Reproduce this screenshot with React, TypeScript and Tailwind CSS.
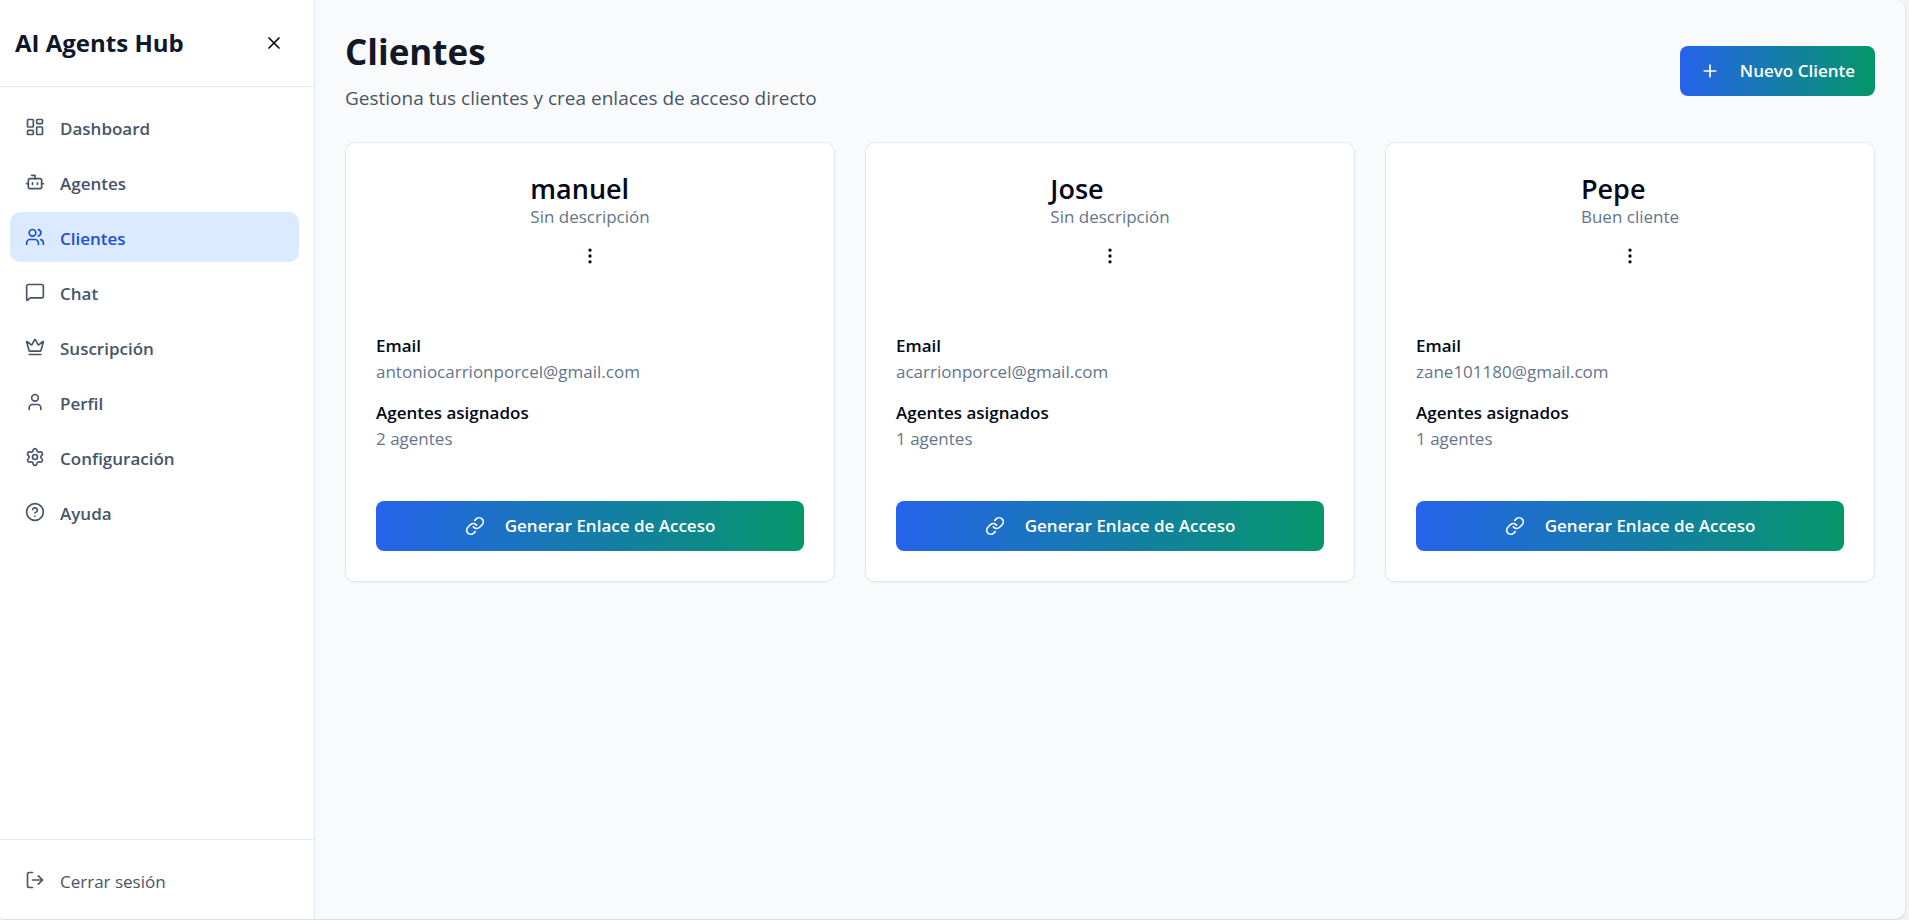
import { useState } from 'react';
import {
  Bot,
  CircleHelp,
  Crown,
  EllipsisVertical,
  LayoutDashboard,
  Link,
  LogOut,
  MessageSquare,
  Plus,
  Settings,
  User,
  Users,
  X,
} from 'lucide-react';

type Client = {
  id: number;
  name: string;
  description: string;
  email: string;
  agents: number;
};

const navItems = [
  { label: 'Dashboard', icon: LayoutDashboard },
  { label: 'Agentes', icon: Bot },
  { label: 'Clientes', icon: Users },
  { label: 'Chat', icon: MessageSquare },
  { label: 'Suscripción', icon: Crown },
  { label: 'Perfil', icon: User },
  { label: 'Configuración', icon: Settings },
  { label: 'Ayuda', icon: CircleHelp },
];

const clients: Client[] = [
  { id: 1, name: 'manuel', description: '', email: 'antoniocarrionporcel@gmail.com', agents: 2 },
  { id: 2, name: 'Jose', description: '', email: 'acarrionporcel@gmail.com', agents: 1 },
  { id: 3, name: 'Pepe', description: 'Buen cliente', email: 'zane101180@gmail.com', agents: 1 },
];

function Sidebar() {
  const [active, setActive] = useState('Clientes');

  return (
    <aside className="flex w-[315px] shrink-0 flex-col border-r border-[#e2e8f0] bg-white">
      <div className="flex h-[87px] items-center justify-between border-b border-[#e2e8f0] pr-5 pb-px pl-[15px]">
        <h2 className="text-2xl font-bold text-[#0f172a]">AI Agents Hub</h2>
        <button type="button" aria-label="Cerrar menú" className="flex h-10 w-10 items-center justify-center text-[#020817]">
          <X className="h-5 w-5" />
        </button>
      </div>

      <nav className="flex flex-1 flex-col gap-[5px] pt-[15px] pr-[15px] pl-[10px]">
        {navItems.map(({ label, icon: Icon }) => {
          const color = label === active ? 'bg-[#dbeafe] text-[#1d4ed8]' : 'text-[#475569] hover:bg-[#f1f5f9]';

          return (
            <a
              key={label}
              href="#"
              onClick={() => setActive(label)}
              className={`flex h-[50px] items-center gap-[15px] rounded-[10px] px-[15px] text-[17px] font-semibold ${color}`}
            >
              <Icon className="h-5 w-5" />
              <span className="pt-[3px]">{label}</span>
            </a>
          );
        })}
      </nav>

      <div className="border-t border-[#e2e8f0] pt-[15px] pr-[15px] pb-[14px] pl-[10px]">
        <button type="button" className="flex h-[50px] w-full items-center gap-[15px] px-[15px] text-[17px] text-[#475569]">
          <LogOut className="h-5 w-5" />
          <span className="pt-[3px]">Cerrar sesión</span>
        </button>
      </div>
    </aside>
  );
}

function ClientCard({ client }: { client: Client }) {
  return (
    <article className="rounded-[10px] border border-[#e2e8f0] bg-white p-[30px] text-[17px] leading-[26px] shadow-xs">
      <div className="flex h-[160px] flex-col items-center gap-0.5">
        <div>
          <h3 className="text-[27px] leading-8 font-semibold text-[#020817]">{client.name}</h3>
          <p className="leading-6 text-[#64748b]">{client.description || 'Sin descripción'}</p>
        </div>
        <button type="button" aria-label="Opciones" className="flex h-[50px] w-[50px] items-center justify-center text-[#020817]">
          <EllipsisVertical className="h-5 w-5" />
        </button>
      </div>

      <dl>
        <dt className="font-semibold text-[#020817]">Email</dt>
        <dd className="mb-[15px] text-[#64748b]">{client.email}</dd>
        <dt className="font-semibold text-[#020817]">Agentes asignados</dt>
        <dd className="text-[#64748b]">{client.agents} agentes</dd>
      </dl>

      <button
        type="button"
        className="mt-[49px] flex h-[50px] w-full items-center justify-center gap-5 rounded-lg bg-linear-to-r/srgb from-[#2563eb] to-[#059669] font-semibold text-white"
      >
        <Link className="h-5 w-5" />
        Generar Enlace de Acceso
      </button>
    </article>
  );
}

export default function App() {
  return (
    <div className="min-h-screen bg-[#f3f3f3] pr-1 font-['Open_Sans','Noto_Sans',sans-serif]">
      <div className="flex min-h-[calc(100vh-1px)] overflow-hidden rounded-r-[10px] rounded-bl-[4px] bg-[#f8fafc] shadow">
        <Sidebar />

        <main className="min-w-0 flex-1 p-[30px]">
          {/* Header */}
          <div className="mb-[30px] flex items-center justify-between">
            <div>
              <h1 className="text-[35px] leading-[43px] font-bold text-[#111827]">Clientes</h1>
              <p className="mt-[11px] text-[19px] leading-7 text-[#4b5563]">
                Gestiona tus clientes y crea enlaces de acceso directo
              </p>
            </div>
            <button
              type="button"
              className="flex h-[50px] items-center gap-5 rounded-lg bg-linear-to-r/srgb from-[#2563eb] to-[#059669] px-5 text-[17px] font-semibold text-white"
            >
              <Plus className="h-5 w-5" />
              Nuevo Cliente
            </button>
          </div>

          {/* Client cards */}
          <div className="grid gap-[30px] md:grid-cols-2 lg:grid-cols-3">
            {clients.map((client) => (
              <ClientCard key={client.id} client={client} />
            ))}
          </div>
        </main>
      </div>
    </div>
  );
}
